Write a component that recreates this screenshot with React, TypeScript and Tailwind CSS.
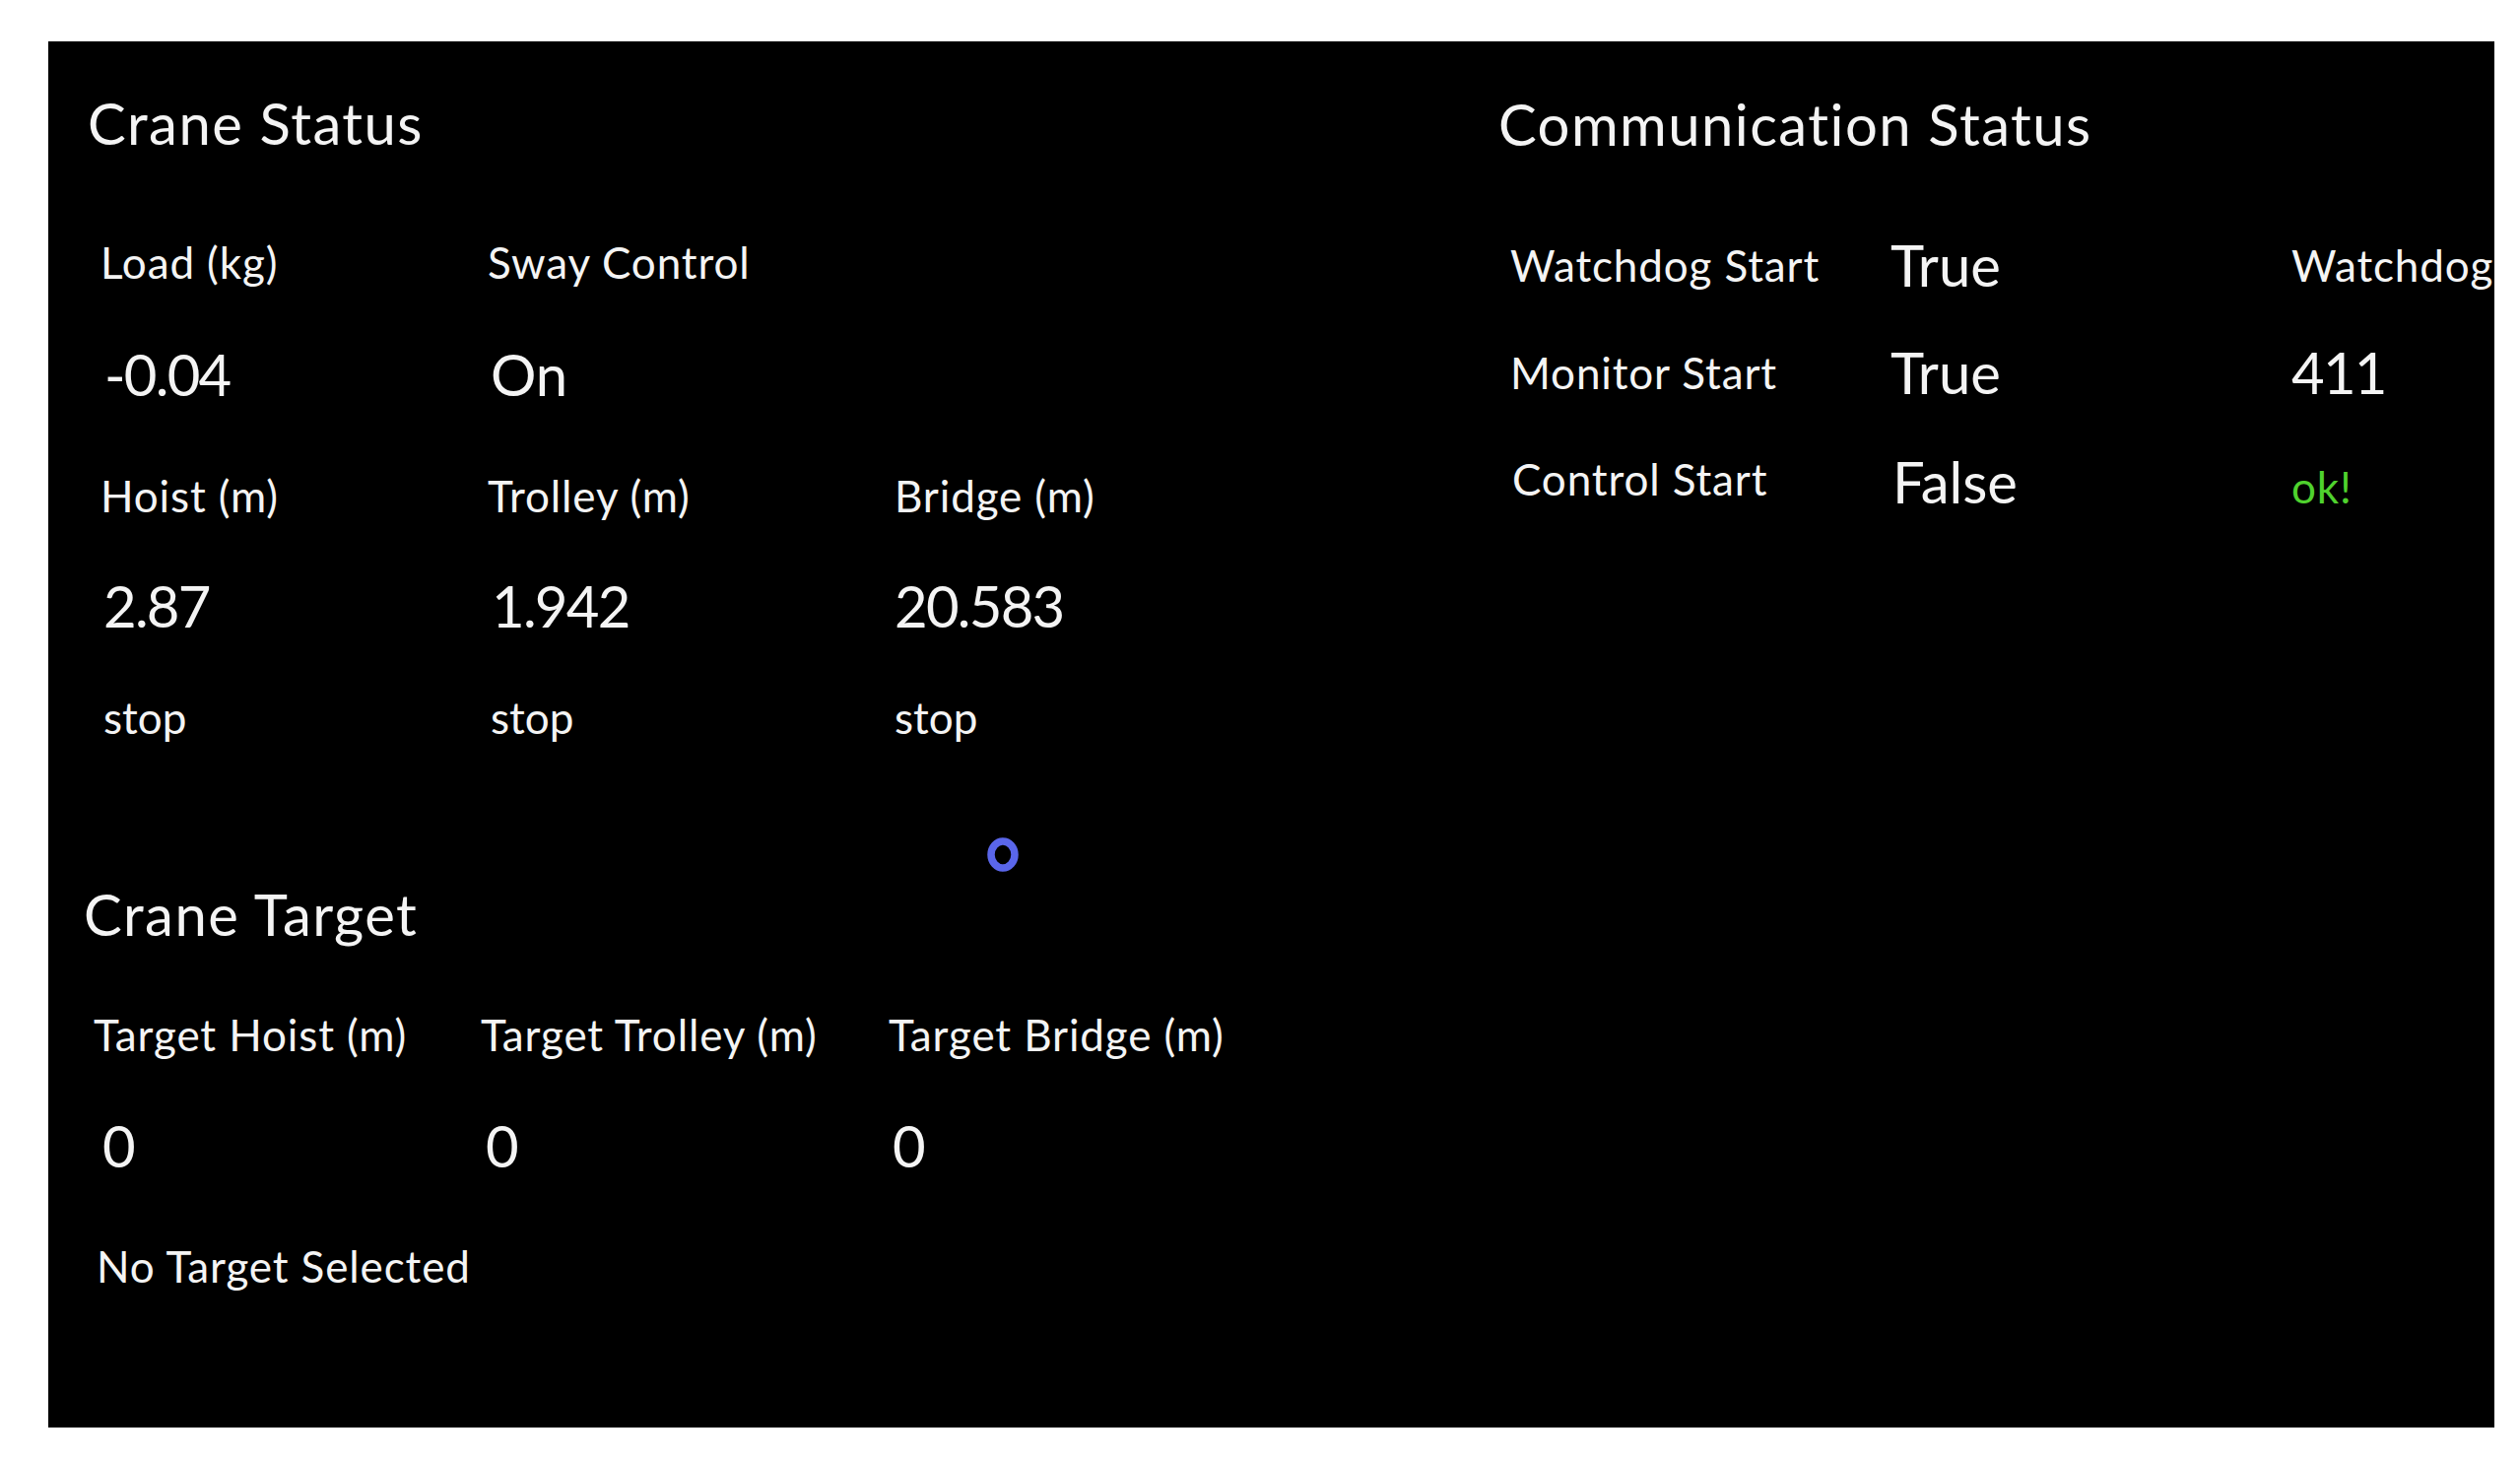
export default function App() {
  const label = "text-[44px] leading-none tracking-[0.02em] whitespace-nowrap";
  const value = "text-[58px] leading-none whitespace-nowrap";
  const num = "text-[58px] leading-none tracking-[-0.03em] whitespace-nowrap";
  const title = "text-[58px] leading-none tracking-[0.025em] whitespace-nowrap";

  return (
    <div className="min-h-screen bg-white pt-[42px] pl-[49px] font-['Lato',sans-serif]">
      <div className="flex h-[1407px] w-[2483px] overflow-hidden bg-black text-[#f4f4f4]">
        {/* crane side */}
        <div className="flex w-[1470px] shrink-0 flex-col pt-[54px]">
          <h1 className={`${title} ml-[40px]`}>Crane Status</h1>

          <div className="ml-[53px] mt-[90px] grid grid-cols-[393px_413px_auto]">
            <div className={label}>Load (kg)</div>
            <div className={label}>Sway Control</div>
            <div />
          </div>
          <div className="ml-[53px] mt-[63px] grid grid-cols-[393px_413px_auto]">
            <div className={`${num} pl-[4px]`}>-0.04</div>
            <div className={`${value} pl-[3px]`}>On</div>
            <div />
          </div>

          <div className="ml-[53px] mt-[72px] grid grid-cols-[393px_413px_auto]">
            <div className={label}>Hoist (m)</div>
            <div className={label}>Trolley (m)</div>
            <div className={label}>Bridge (m)</div>
          </div>
          <div className="ml-[53px] mt-[61px] grid grid-cols-[393px_413px_auto]">
            <div className={`${num} pl-[3px]`}>2.87</div>
            <div className={`${num} pl-[4px]`}>1.942</div>
            <div className={num}>20.583</div>
          </div>
          <div className="ml-[53px] mt-[62px] grid grid-cols-[393px_413px_auto]">
            <div className="pl-[3px] text-[44px] leading-none">stop</div>
            <div className="pl-[3px] text-[44px] leading-none">stop</div>
            <div className="text-[44px] leading-none">stop</div>
          </div>

          {/* busy ring */}
          <div className="ml-[953px] mt-[100px] h-[35px] w-[32px]">
            <svg viewBox="0 0 32 35" className="h-full w-full">
              <ellipse cx="16" cy="17.5" rx="12" ry="13.5" fill="none" stroke="#5a66ea" strokeWidth="7.5" />
            </svg>
          </div>

          <h2 className={`${title} ml-[36px] mt-[14px]`}>Crane Target</h2>
          <div className="ml-[46px] mt-[71px] grid grid-cols-[393px_414px_auto]">
            <div className={label}>Target Hoist (m)</div>
            <div className={label}>Target Trolley (m)</div>
            <div className={label}>Target Bridge (m)</div>
          </div>
          <div className="ml-[46px] mt-[62px] grid grid-cols-[393px_414px_auto]">
            <div className={`${value} pl-[9px]`}>0</div>
            <div className={`${value} pl-[5px]`}>0</div>
            <div className={`${value} pl-[4px]`}>0</div>
          </div>
          <div className={`${label} ml-[49px] mt-[71px]`}>No Target Selected</div>
        </div>

        {/* communication side */}
        <div className="flex min-w-0 flex-1 flex-col pt-[55px]">
          <h1 className={`${title} ml-[2px]`}>Communication Status</h1>
          <div className="ml-[14px] mt-[60px] grid grid-cols-[386px_407px_auto] grid-rows-[108px_109px_108px] items-center">
            <div className={label}>Watchdog Start</div>
            <div className={value}>True</div>
            <div className={label}>Watchdog Count</div>

            <div className={label}>Monitor Start</div>
            <div className={value}>True</div>
            <div className={num}>411</div>

            <div className={`${label} pl-[2px]`}>Control Start</div>
            <div className={`${value} pl-[2px] pt-[6px]`}>False</div>
            <div className={`${label} pt-[16px] text-[#4fd22e]`}>ok!</div>
          </div>
        </div>
      </div>
    </div>
  );
}
